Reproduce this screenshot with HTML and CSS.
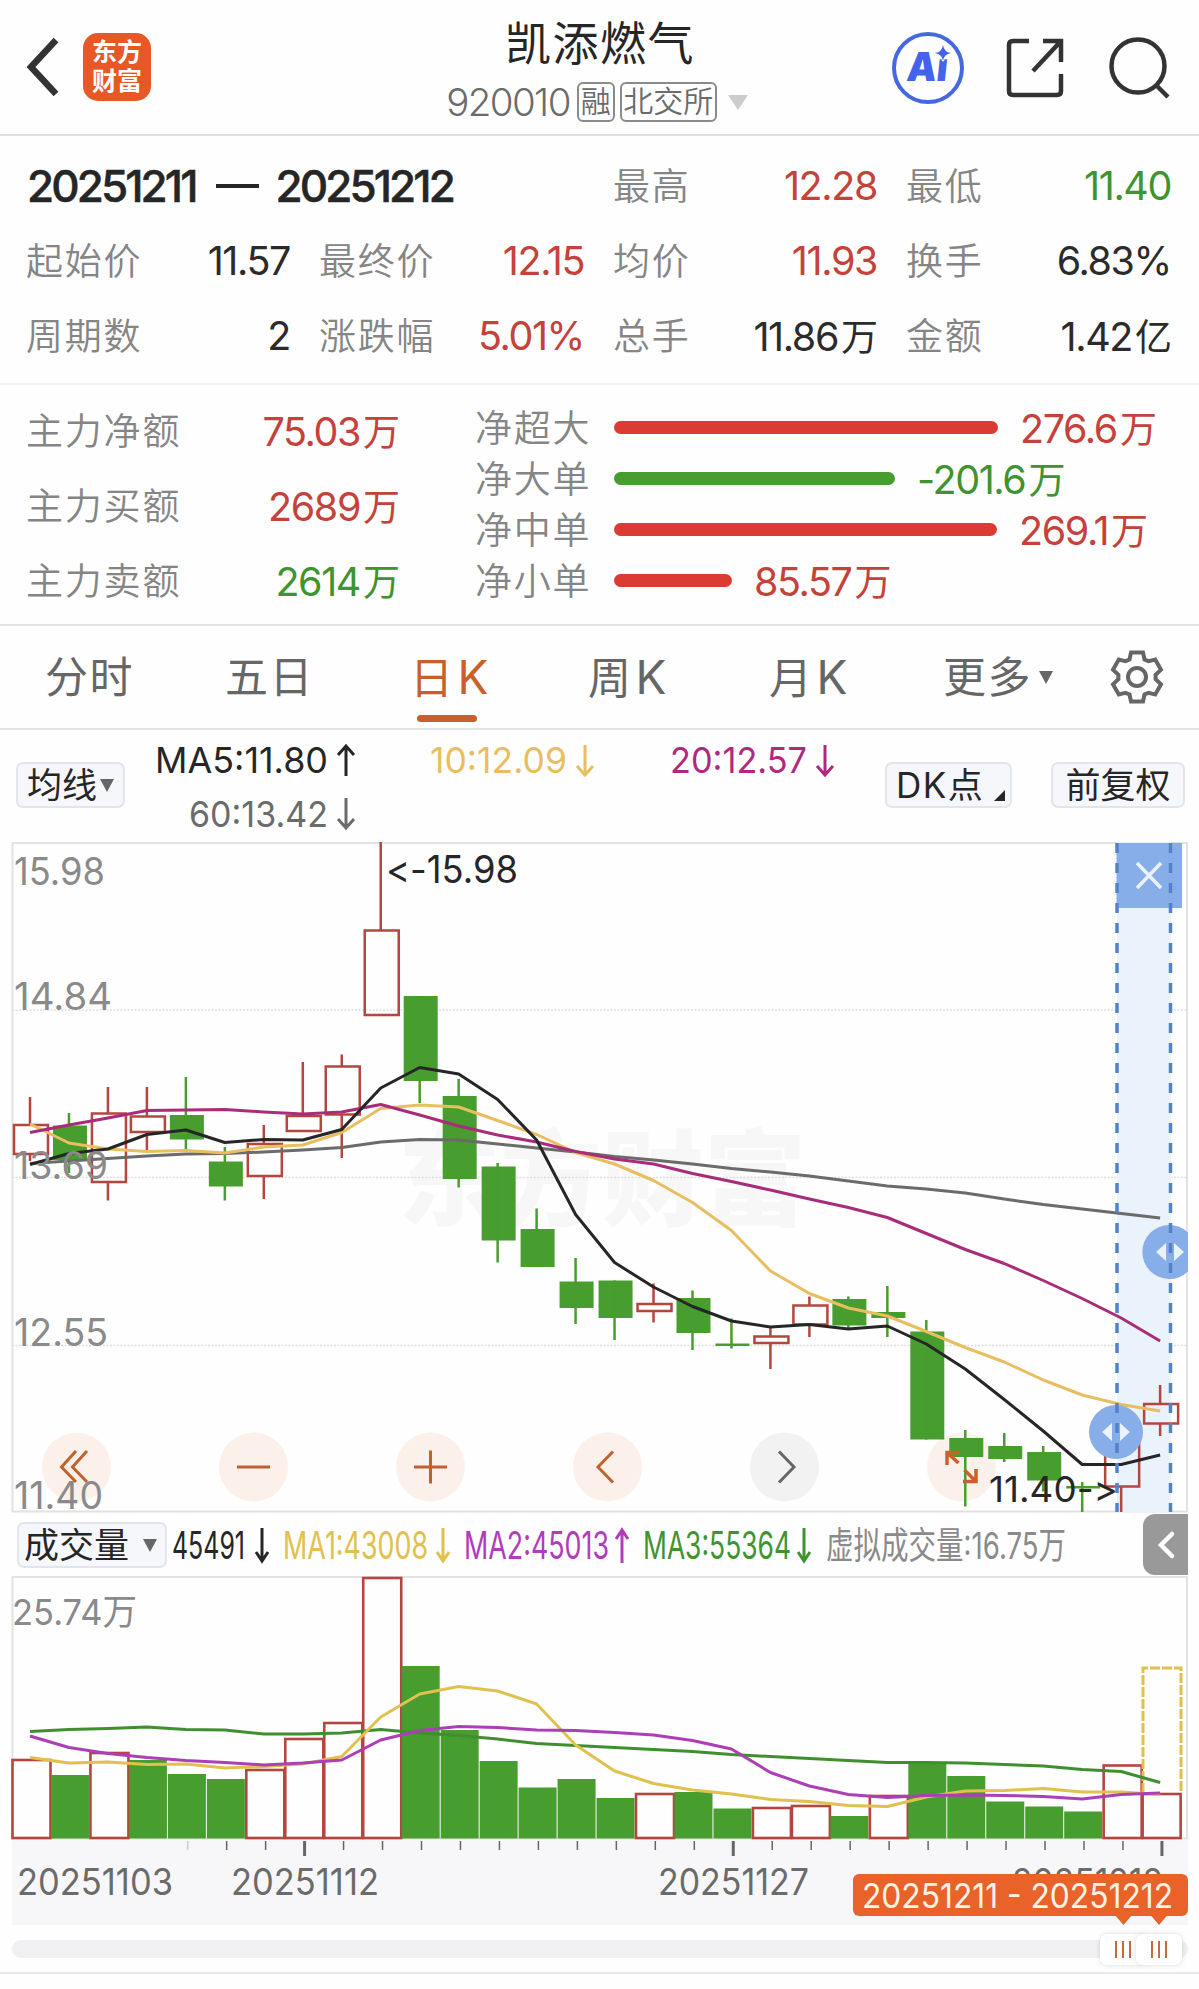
FILE: index.html
```html
<!DOCTYPE html>
<html lang="zh-CN">
<head>
<meta charset="utf-8">
<title>凯添燃气 920010</title>
<link rel="stylesheet" href="styles.css">
</head>
<body>
<header class="topbar">
  <div class="topbar-left">
    <svg class="back" width="32" height="60" viewBox="0 0 32 60"><path d="M29 3 4 30l25 27"/></svg>
    <div class="logo"><span>东方</span><span>财富</span></div>
  </div>
  <div class="stock">
    <h1>凯添燃气</h1>
    <div class="stock-sub"><span class="code">920010</span><span class="tag">融</span><span class="tag wide">北交所</span><i class="caret"></i></div>
  </div>
  <div class="topbar-right">
    <svg width="74" height="74" viewBox="0 0 74 74" class="ai"><circle cx="37" cy="37" r="34"/><text transform="skewX(-6)" x="20" y="50.500" textLength="41" lengthAdjust="spacingAndGlyphs">Aı</text><path d="M52 14q1 7 8 8-7 1-8 8-1-7-8-8 7-1 8-8z"/></svg>
    <svg width="60" height="62" viewBox="0 0 60 62" class="line-icon"><path d="M24 4H8Q4 4 4 8v46q0 4 4 4h44q4 0 4-4V37M38 4h18v21M56 4 28 34"/></svg>
    <svg width="62" height="62" viewBox="0 0 62 62" class="line-icon search"><circle cx="30" cy="29" r="26.500"/><path d="M48 48l12 12"/></svg>
  </div>
</header>

<section class="stats">
  <div class="range"><span>20251211</span><i></i><span>20251212</span></div>
  <div class="stat"><span>最高</span><b class="up">12.28</b></div>
  <div class="stat"><span>最低</span><b class="down">11.40</b></div>
  <div class="stat"><span>起始价</span><b>11.57</b></div>
  <div class="stat"><span>最终价</span><b class="up">12.15</b></div>
  <div class="stat"><span>均价</span><b class="up">11.93</b></div>
  <div class="stat"><span>换手</span><b>6.83%</b></div>
  <div class="stat"><span>周期数</span><b>2</b></div>
  <div class="stat"><span>涨跌幅</span><b class="up">5.01%</b></div>
  <div class="stat"><span>总手</span><b>11.86<em>万</em></b></div>
  <div class="stat"><span>金额</span><b>1.42<em>亿</em></b></div>
</section>

<section class="flow">
  <div class="flow-main">
    <div class="stat"><span>主力净额</span><b class="up">75.03<em>万</em></b></div>
    <div class="stat"><span>主力买额</span><b class="up">2689<em>万</em></b></div>
    <div class="stat"><span>主力卖额</span><b class="down">2614<em>万</em></b></div>
  </div>
  <div class="flow-bars">
    <div class="flow-row up"><span>净超大</span><i style="width:384px"></i><b>276.6<em>万</em></b></div>
    <div class="flow-row down"><span>净大单</span><i style="width:281px"></i><b>-201.6<em>万</em></b></div>
    <div class="flow-row up"><span>净中单</span><i style="width:383px"></i><b>269.1<em>万</em></b></div>
    <div class="flow-row up"><span>净小单</span><i style="width:118px"></i><b>85.57<em>万</em></b></div>
  </div>
</section>

<nav class="tabs">
  <a>分时</a><a>五日</a><a class="active">日<span>K</span></a><a>周<span>K</span></a><a>月<span>K</span></a><a class="more">更多<i class="tri"></i></a>
  <svg class="gear" width="56" height="56" viewBox="-28 -28 56 56"><path d="M-6-24.500H6L7.500-17.500 11.600-15.900 18.200-17.500 24-7.300 18.600-2.100V2.100L24 7.300 18.200 17.500 11.600 15.900 7.500 17.500 6 24.500H-6L-7.500 17.500-11.600 15.900-18.200 17.500-24 7.300-18.600 2.100V-2.100L-24-7.300-18.200-17.500-11.600-15.900-7.500-17.500z"/><circle r="9"/></svg>
</nav>

<section class="ma-row">
  <button class="chip">均线<i class="tri"></i></button>
  <svg class="ma-values" width="730" height="111" viewBox="140 730 730 111">
    <g font-size="36">
      <text x="155" y="773" textLength="173" lengthAdjust="spacingAndGlyphs" fill="#262626">MA5:11.80</text>
      <text x="189" y="827" textLength="139" lengthAdjust="spacingAndGlyphs" fill="#6b6b6b">60:13.42</text>
      <text x="430" y="773" textLength="137" lengthAdjust="spacingAndGlyphs" fill="#e8be60">10:12.09</text>
      <text x="670" y="773" textLength="137" lengthAdjust="spacingAndGlyphs" fill="#b0297f">20:12.57</text>
    </g>
    <g class="arrows">
      <path stroke="#262626" d="M346 776V746M338 755l8-9 8 9"/>
      <path stroke="#6b6b6b" d="M346 798v30M338 819l8 9 8-9"/>
      <path stroke="#e8be60" d="M585 745v30M577 766l8 9 8-9"/>
      <path stroke="#b0297f" d="M825 745v30M817 766l8 9 8-9"/>
    </g>
  </svg>
  <button class="chip dk">DK点<i class="corner"></i></button>
  <button class="chip fq">前复权</button>
</section>

<section class="price"><svg id="price" width="1199" height="672" viewBox="0 841 1199 672"></svg></section>

<section class="vol-row">
  <button class="chip">成交量<i class="tri"></i></button>
  <svg width="976" height="63" viewBox="167 1513 976 63">
    <g font-size="38">
      <text x="172" y="1559" textLength="73" lengthAdjust="spacingAndGlyphs" fill="#262626">45491</text>
      <text x="283" y="1559" textLength="145" lengthAdjust="spacingAndGlyphs" fill="#e2c04c">MA1:43008</text>
      <text x="464" y="1559" textLength="145" lengthAdjust="spacingAndGlyphs" fill="#b03cbb">MA2:45013</text>
      <text x="643" y="1559" textLength="148" lengthAdjust="spacingAndGlyphs" fill="#3f9430">MA3:55364</text>
      <text x="826" y="1559" textLength="240" lengthAdjust="spacingAndGlyphs" fill="#8a8a8a" font-size="37">虚拟成交量:16.75万</text>
    </g>
    <g class="arrows">
      <path stroke="#262626" d="M262 1528v33M256 1552l6 9 6-9"/>
      <path stroke="#e2c04c" d="M443 1528v33M437 1552l6 9 6-9"/>
      <path stroke="#b03cbb" d="M622 1563v-33M616 1539l6-9 6 9"/>
      <path stroke="#3f9430" d="M804 1528v33M798 1552l6 9 6-9"/>
    </g>
  </svg>
  <div class="drawer"><svg width="20" height="30" viewBox="0 0 20 30"><path d="M16 4 5 15l11 11"/></svg></div>
</section>

<section class="volume"><svg id="volume" width="1199" height="264" viewBox="0 1576 1199 264"></svg></section>

<section class="axis">
  <svg id="axis" width="1176" height="85" viewBox="12 1840 1176 85"></svg>
  <div class="badge"><svg width="335" height="52" viewBox="853 1874 335 52"><rect x="853" y="1874" width="335" height="42" rx="6"/><path d="M1115 1915h17l-8.500 10zM1150.500 1915h17l-8.500 10z"/><text x="862" y="1908" font-size="33.500" textLength="311" lengthAdjust="spacingAndGlyphs">20251211 - 20251212</text></svg></div>
</section>

<section class="slider">
  <div class="track"></div>
  <div class="thumb first"><i></i><i></i><i></i></div>
  <div class="thumb"><i></i><i></i><i></i></div>
</section>
<script src="chart.js"></script>
</body>
</html>
```
FILE: styles.css
```css
* { box-sizing: border-box; }
body {
  margin: 0;
  width: 1199px;
  height: 1989px;
  overflow: hidden;
  background: #fefefe;
  color: #2b2b2b;
  font-family: Inter, "Noto Sans CJK SC", sans-serif;
  font-weight: 400;
}
svg { display: block; flex: none; }
svg text { font-family: Inter, "Noto Sans CJK SC", sans-serif; }
b, em, i { font-weight: inherit; font-style: normal; }
.up b, b.up { color: #c5423b; }
.down b, b.down { color: #3f9430; }

.topbar {
  display: grid;
  grid-template-columns: 400px 400px 399px;
  height: 136px;
  border-bottom: 2px solid #dfe1e2;
}
.topbar-left { display: flex; align-items: center; padding-left: 27px; gap: 24px; }
.back path { fill: none; stroke: #333; stroke-width: 6.500; }
.logo {
  display: flex;
  flex-direction: column;
  justify-content: center;
  align-items: center;
  width: 68px;
  height: 68px;
  border-radius: 15px;
  background: #e85827;
  color: #fff;
  font-size: 25px;
  font-weight: 700;
  line-height: 29px;
}
.stock { display: flex; flex-direction: column; align-items: center; padding-top: 14px; }
.stock h1 { margin: 0; font-size: 46px; font-weight: 400; line-height: 58px; letter-spacing: 1.5px; color: #262626; }
.stock-sub { display: flex; align-items: center; height: 40px; margin: 10px 6px 0 0; color: #6b6b6b; }
.code { font-size: 38.500px; font-weight: 350; letter-spacing: -1.600px; margin-right: 7px; }
.tag { height: 40px; width: 38px; border: 2px solid #8a8a8a; border-radius: 6px; font-size: 30px; font-weight: 350; line-height: 34px; text-align: center; margin-right: 5px; display: flex; justify-content: center; }
.tag.wide { width: 97px; margin-right: 11px; }
.caret { border: 10.500px solid transparent; border-top: 15px solid #ccc; border-bottom: 0; }
.topbar-right { display: flex; align-items: center; gap: 40px; padding: 1px 0 0 91px; }
.ai circle { fill: none; stroke: #4468e0; stroke-width: 4; }
.ai text { font-size: 40px; font-weight: 900; fill: #4363ee; }
.ai path { fill: #4363ee; stroke: #fefefe; stroke-width: 2; paint-order: stroke; }
.line-icon { fill: none; stroke: #333; stroke-width: 4.500; margin-right: 1px; }
.search { margin-left: 2px; }

.stats {
  display: grid;
  grid-template-columns: 264px 265px 264px 265px;
  grid-auto-rows: 75px;
  column-gap: 29px;
  height: 249px;
  padding: 12px 0 0 27px;
  border-bottom: 2px solid #f3f3f3;
}
.range { grid-column: span 2; display: flex; align-items: center; font-size: 44px; font-weight: 500; -webkit-text-stroke: .500px #262626; letter-spacing: -2.900px; color: #262626; }
.range i { width: 43px; height: 4px; margin: 0 17px 0 20px; background: #262626; }
.stat { display: flex; justify-content: space-between; align-items: center; white-space: nowrap; }
.stat span, .flow-row span { color: #858585; font-size: 37px; font-weight: 350; letter-spacing: 1.800px; position: relative; top: -2px; left: -1px; }
.stat b, .flow-row b { font-size: 39.500px; letter-spacing: -1.400px; margin-right: 1px; font-weight: 380; }
.stat em, .flow-row em { font-size: 37px; margin-left: 3px; letter-spacing: 0; }
.stat b:has(em) { margin-right: 0; position: relative; top: -1px; }

.flow { display: flex; height: 241px; border-bottom: 2px solid #e4e4e4; padding-left: 27px; }
.flow-main { width: 373px; display: grid; grid-auto-rows: 75px; padding-top: 8px; }
.flow-bars { margin-left: 76px; padding-top: 17px; }
.flow-row { display: flex; align-items: center; height: 51px; white-space: nowrap; }
.flow-row span { width: 138px; }
.flow-row i { height: 13px; border-radius: 7px; background: #db3b33; }
.flow-row.down i { background: #479d2d; }
.flow-row b { margin-left: 22px; position: relative; top: -1px; }

.tabs { display: flex; align-items: center; height: 104px; padding-left: 45px; border-bottom: 2px solid #e4e4e4; color: #666; font-size: 43px; }
.tabs a { width: 180px; height: 100%; line-height: 103px; letter-spacing: 1.500px; white-space: nowrap; }
.tabs a:nth-child(3) { width: 176px; padding-left: 5px; }
.tabs a:nth-child(4) { width: 181px; padding-left: 7px; }
.tabs a:nth-child(5) { width: 181px; padding-left: 7px; }
.tabs a span { margin-left: 3px; font-size: 46px; font-weight: 380; }
.tabs a.active { color: #c9602b; position: relative; }
.tabs a.active::after { content: ""; position: absolute; left: 12px; bottom: 6px; width: 60px; height: 7px; border-radius: 4px; background: #c9602b; }
.tabs .more { width: 166px; display: flex; align-items: center; }
.tri { display: inline-block; border: 7.500px solid transparent; border-top: 13px solid #666; border-bottom: 0; }
.more .tri { margin-left: 7px; }
.gear { fill: none; stroke: #666; stroke-width: 4; }

.ma-row { display: flex; height: 111px; padding-left: 16px; align-items: flex-start; }
.chip {
  display: flex;
  align-items: center;
  justify-content: center;
  width: 109px;
  height: 46px;
  margin: 32px 0 0;
  padding: 0;
  border: 2px solid #e3e5ea;
  border-radius: 7px;
  background: #f6f7fa;
  color: #262626;
  font: 400 35px/40px Inter, "Noto Sans CJK SC", sans-serif;
  white-space: nowrap;
}
.chip .tri { margin-left: 3px; }
.ma-values { margin-left: 15px; }
.arrows path { fill: none; stroke-width: 3; }
.dk { width: 127px; margin-left: 15px; position: relative; justify-content: flex-start; padding-left: 9px; font-size: 35px; letter-spacing: 1.500px; }
.corner { position: absolute; right: 5px; bottom: 5px; border-left: 11px solid transparent; border-bottom: 11px solid #262626; }
.fq { width: 134px; margin-left: 39px; }
.price { height: 672px; }
#price text { font-feature-settings: "calt" 0, "liga" 0; }

.vol-row { display: flex; height: 63px; padding-left: 17px; }
.vol-row .chip { width: 150px; margin-top: 9px; padding-right: 3px; }
.vol-row .chip .tri { margin-left: 14px; }
.drawer { width: 45px; height: 61px; margin-top: 1px; border-radius: 12px 0 0 12px; background: #999; display: flex; align-items: center; justify-content: center; }
.drawer path { fill: none; stroke: #fff; stroke-width: 4.500; stroke-linecap: round; }

.axis { position: relative; margin-left: 12px; width: 1176px; height: 85px; background: #f7f7fa; }
.badge { position: absolute; right: 0; top: 34px; }
.badge rect, .badge path { fill: #e8622a; }
.badge text { fill: #fff3e6; }

.slider { position: relative; height: 49px; padding: 15px 0 0 12px; border-bottom: 2px solid #e8e8e8; }
.track { width: 1176px; height: 18px; border-radius: 9px; background: #f0f0f3; }
.thumb { position: absolute; left: 1136px; top: 9px; width: 46px; height: 31px; border-radius: 7px; background: #fff; box-shadow: 0 0 5px rgba(0,0,0,.15); display: flex; align-items: center; justify-content: center; gap: 4.500px; }
.thumb.first { left: 1100px; }
.thumb i { width: 2.500px; height: 17px; background: #c46b3e; }
```
FILE: chart.js
```js
const RED = '#b5453f', GREEN = '#479d2d';
const X0 = 30, STEP = 38.97;
const cx = i => X0 + STEP * i;

// [direction, high, bodyTop, bodyBottom, low]
const candles = [
  ['r',1097,1124.5,1154.5,1161],['g',1113,1125.5,1160,1173],['r',1087,1113,1182.5,1200.5],
  ['r',1087,1116,1132.5,1151],['g',1077,1115,1139.5,1152],['g',1147,1161.5,1186.5,1200.5],
  ['r',1125,1143.5,1176.5,1199],['r',1062,1115.5,1131.5,1131.5],['r',1054.5,1066,1115,1158],
  ['r',842,930,1015.5,1015.5],['g',996,996,1081,1103],['g',1079,1096,1179,1187.5],
  ['g',1163,1166.5,1240.5,1262.5],['g',1208.5,1229,1267,1267],['g',1258,1281.5,1308,1324],
  ['g',1280.5,1280.5,1318,1340],['r',1283.5,1303.5,1311.5,1322.5],['g',1290.5,1298,1333,1350],
  ['g',1318.5,1343.5,1346,1348.5],['r',1327,1336,1343.5,1369],['r',1296.5,1305,1325,1337],
  ['g',1296.5,1299,1325.5,1328],['g',1286,1312,1318,1337],['g',1320,1331.5,1439.5,1439.5],
  ['g',1430,1438,1457,1506.5],['g',1433,1446,1459,1462],['g',1446,1452,1480.5,1491.5],
  ['g',1482,1486,1488.5,1512],['r',1405,1440,1487,1512],['r',1385,1403.5,1424,1436]
];
const ma = [
  ['#6b6b6b',[1163.5,1161,1158.5,1156,1154,1153.5,1152,1150,1147.5,1142,1139.5,1140,1144,1148,1152,1156.5,1160,1164,1168.5,1172,1176,1181,1186,1189,1193,1199,1204.5,1209,1213.5,1218]],
  ['#e8be60',[1124,1143,1149,1151.5,1150.5,1153,1147,1145,1132.5,1108.5,1105,1107,1120.5,1134.5,1152.5,1164,1180.5,1202.5,1230.5,1271,1293.5,1308,1316,1331.5,1347.5,1362,1380,1395,1404.5,1411]],
  ['#a92c7b',[1132.5,1125,1118,1110.5,1110,1109.5,1112,1114,1112,1104.5,1115,1126,1135,1142,1151.5,1159,1164,1173.5,1181.5,1190,1199,1207.5,1217.5,1233.5,1249.5,1263.5,1280.5,1298.5,1318,1341]],
  ['#262626',[1164.5,1153.5,1149,1134.5,1130,1142.5,1139.5,1140,1129.5,1088,1067.5,1074,1099.5,1140,1214.5,1262.5,1287,1306.5,1321,1327,1324.5,1329,1326,1344,1369,1399.5,1431,1464.5,1464.5,1455]]
];
const volumes = [1759,1775,1752,1760,1774,1779,1769,1738,1722,1577,1666,1730,1761,1787.5,1779,1798,1793,1792,1808.5,1807,1805,1816,1795,1763,1776,1801.5,1806.5,1811.5,1764.5,1793];
const volumeUp = [0, 2, 6, 7, 8, 9, 16, 19, 20, 22, 28, 29];
const volumeMa = [
  ['#3f8f30',[1731.5,1729.5,1728.5,1727,1729.5,1730,1734,1734,1733,1729.5,1733,1735.5,1739,1743.5,1745.5,1747.5,1749.5,1751.5,1754.5,1756.5,1758.5,1760.5,1762.5,1762.5,1763,1764.5,1766,1769.5,1771.5,1782.5]],
  ['#e0c04f',[1757.5,1763,1762,1764.5,1764,1768,1766.5,1764,1756.5,1717,1694,1686.5,1691,1704,1745,1771,1783.5,1790,1794,1799.5,1801.5,1805.5,1806.5,1797,1791,1790.5,1788.5,1792,1792,1794.5]],
  ['#ac3fb5',[1736,1747.5,1753.5,1757.5,1760.5,1762.5,1765,1763,1760,1740,1730.5,1726.5,1727.5,1730,1730.5,1732.5,1735,1740.5,1749,1772.5,1786,1794.5,1797.5,1795.5,1795,1795.5,1796.5,1799,1794.5,1793]]
];

const line = (color, ys) =>
  `<polyline fill="none" stroke="${color}" stroke-width="3" stroke-linejoin="round" points="${ys.map((y, i) => cx(i) + ',' + y).join(' ')}"/>`;
const label = (x, y, w, text, color = '#8a8a8a', size = 38.5) =>
  `<text x="${x}" y="${y}" font-size="${size}" fill="${color}" textLength="${w}" lengthAdjust="spacingAndGlyphs">${text}</text>`;

function drawPrice() {
  let s = '<path d="M12.500 843V1511.500H1187V843z" fill="none" stroke="#e2e2e2" stroke-width="2"/>';
  s += '<text x="398" y="1218" font-size="104" font-weight="900" fill="#f7f7f7" textLength="408" lengthAdjust="spacingAndGlyphs">东方财富</text>';
  for (const y of [1010, 1177.5, 1345.5]) s += `<path d="M12 ${y}H1187" stroke="#dedede" stroke-width="1.500" stroke-dasharray="2 1.500"/>`;
  s += '<rect x="1117" y="842" width="54" height="670" fill="#eaf2fb"/>';
  [76.5, 253.5, 430.5, 607.5, 784.5, 961.5].forEach((x, i) => {
    s += `<circle cx="${x}" cy="1467" r="34.500" fill="${i === 4 ? '#f2f2f2' : '#fcf0ea'}"/>`;
  });
  candles.forEach(([dir, high, top, bottom, low], i) => {
    const x = cx(i);
    if (dir === 'g') {
      s += `<rect x="${x - 16}" y="${top}" width="34" height="${bottom - top}" fill="${GREEN}"/><path d="M${x} ${high}V${low}" stroke="${GREEN}" stroke-width="2.500"/>`;
    } else {
      s += `<path d="M${x} ${high}V${top}M${x} ${bottom}V${low}M${x - 16} ${top + .5}h34V${bottom - .5}h-34z" fill="none" stroke="${RED}" stroke-width="2.500"/>`;
    }
  });
  for (const [c, ys] of ma) s += line(c, ys);
  s += '<g fill="none" stroke="#c0622e" stroke-width="3"><path d="M76 1451 61.500 1467 76 1482M87 1451 72.500 1467 87 1482M237 1467h33M414 1467h33M430.500 1450.500v33M613 1451.500 598 1467l15 15.500"/><path stroke="#666" d="M779 1451.500 794 1467l-15 15.500"/><path stroke="#cf5f2a" stroke-width="3.500" d="M960 1452.500H947V1465M947 1452.500 958.500 1463M963 1481.500h13V1469M976 1481.500 964.500 1470"/></g>';
  s += label(14, 885, 91, '15.98') + label(14, 1010, 98, '14.84') + label(14, 1178.5, 94, '13.69') + label(14, 1346, 94, '12.55') + label(14, 1509, 89, '11.40');
  s += label(386, 883, 132, '&lt;-15.98', '#262626') + label(989, 1502, 129, '11.40-&gt;', '#262626', 36);
  s += '<g fill="#87aee8"><rect x="1116.500" y="843" width="65.500" height="65"/><path d="M1188 1232.500A27 27 0 1 0 1188 1271.500z"/><circle cx="1116" cy="1432" r="27"/></g>';
  s += '<path d="M1117 843V1512M1170.500 843V1512" stroke="#5282ca" stroke-width="3.500" stroke-dasharray="10 10"/>';
  s += '<g fill="#eaf2fb"><path d="M1156 1252l10-9v18zM1184 1252l-10-9v18zM1102 1432l10-9v18zM1130 1432l-10-9v18z"/></g><path d="M1137 863l24 25M1161 863l-24 25" stroke="#eaf2fb" stroke-width="3.500"/>';
  document.getElementById('price').innerHTML = s;
}

function drawVolume() {
  let s = '<path d="M12.500 1577V1838.500H1187V1577z" fill="none" stroke="#e2e2e2" stroke-width="2"/>';
  volumes.forEach((top, i) => {
    const x = 12 + STEP * i;
    s += !volumeUp.includes(i)
      ? `<rect x="${x}" y="${top}" width="38" height="${1838.5 - top}" fill="${GREEN}"/>`
      : `<rect x="${x + .5}" y="${top + 1}" width="38" height="${1837 - top}" fill="#fefefe" stroke="${RED}" stroke-width="2.600"/>`;
  });
  s += '<path d="M1143 1793V1668H1181V1793" fill="none" stroke="#e0c04f" stroke-width="3" stroke-dasharray="10 2"/>';
  for (const [c, ys] of volumeMa) s += line(c, ys);
  s += label(12, 1625, 125, '25.74万', '#8a8a8a', 36);
  document.getElementById('volume').innerHTML = s;
}

function drawAxis() {
  let s = '';
  for (let i = 4; i < 30; i++) {
    const major = i === 7 || i === 18 || i === 29;
    s += `<path d="M${cx(i) + 1.8} 1841v${major ? 15 : 9}" stroke="${i === 4 ? '#ccc' : '#666'}" stroke-width="${major ? 3 : 1.5}"/>`;
  }
  s += label(17, 1895, 156, '20251103', '#6b6b6b', 37) + label(231, 1895, 148, '20251112', '#6b6b6b', 37)
     + label(658, 1895, 151, '20251127', '#6b6b6b', 37) + label(1012, 1895, 151, '20251212', '#6b6b6b', 37);
  document.getElementById('axis').innerHTML = s;
}

drawPrice();
drawVolume();
drawAxis();
```
